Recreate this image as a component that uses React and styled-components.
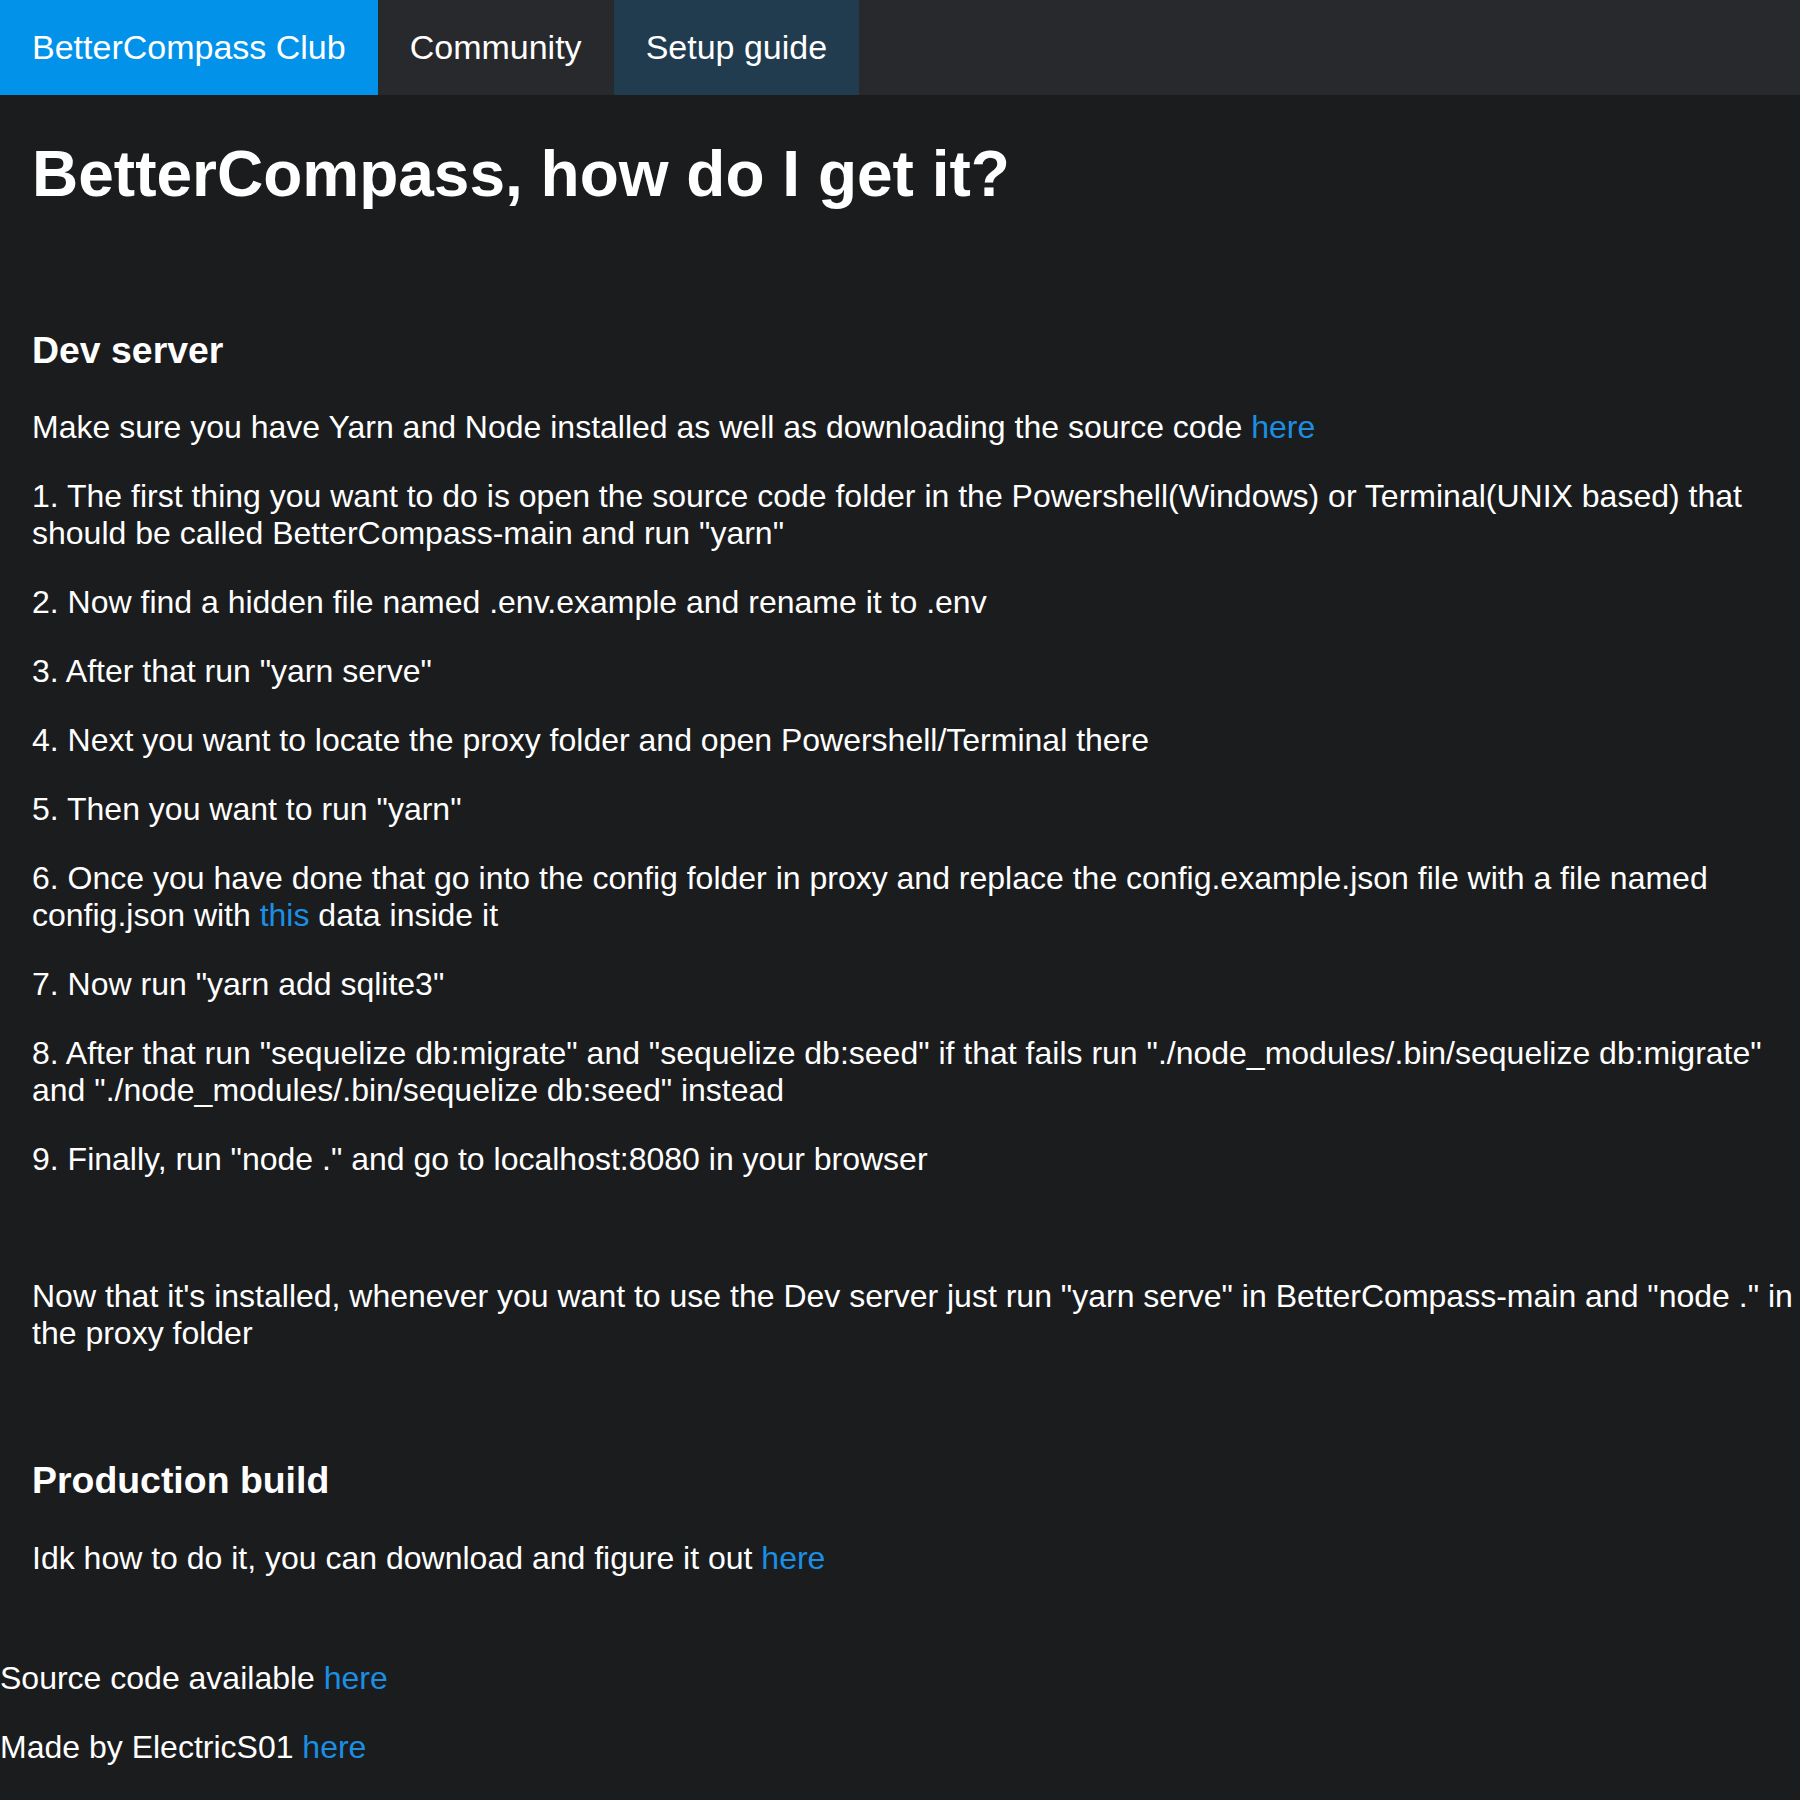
import React from "react";
import styled, { createGlobalStyle } from "styled-components";

const GlobalStyle = createGlobalStyle`
  html, body {
    margin: 0;
    padding: 0;
    background: #1b1c1e;
  }
  body {
    font-family: "Liberation Sans", Arial, Helvetica, sans-serif;
    color: #ffffff;
    min-height: 100vh;
  }
`;

const Page = styled.div`
  min-height: 1800px;
  background: #1b1c1e;
  display: flex;
  flex-direction: column;
`;

const NavBar = styled.nav`
  display: flex;
  height: 95px;
  background: #28292c;
`;

const NavTab = styled.a`
  display: flex;
  align-items: center;
  padding: 0 32px;
  font-size: 34px;
  color: #ffffff;
  text-decoration: none;
  background: ${(p) =>
    p.$variant === "brand" ? "#0292ea" : p.$variant === "active" ? "#213b4f" : "transparent"};
`;

const Main = styled.main`
  display: flex;
  flex-direction: column;
  padding: 0 0 0 32px;
`;

const Title = styled.h1`
  margin: 43px 0 0;
  font-size: 64px;
  font-weight: 700;
  line-height: 1.15;
`;

const SectionTitle = styled.h3`
  margin: ${(p) => (p.$first ? "117.2px" : "107.2px")} 0 0;
  font-size: 37.44px;
  font-weight: 700;
  line-height: 1.15;
`;

const Text = styled.p`
  margin: ${(p) => p.$top || "32.2px"} 0 0;
  font-size: 32px;
  line-height: 1.15;
`;

const Link = styled.a`
  color: #1a8fe3;
  text-decoration: none;
`;

const Footer = styled.footer`
  display: flex;
  flex-direction: column;
  padding-top: 83.8px;
`;

const FooterLine = styled.p`
  margin: ${(p) => (p.$first ? "0" : "32.2px")} 0 0;
  font-size: 32px;
  line-height: 1.15;
`;

export default function App() {
  return (
    <>
      <GlobalStyle />
      <Page>
        <NavBar>
          <NavTab $variant="brand">BetterCompass Club</NavTab>
          <NavTab>Community</NavTab>
          <NavTab $variant="active">Setup guide</NavTab>
        </NavBar>
        <Main>
          <Title>BetterCompass, how do I get it?</Title>
          <SectionTitle $first>Dev server</SectionTitle>
          <Text $top="37.6px">
            Make sure you have Yarn and Node installed as well as downloading the source code{" "}
            <Link>here</Link>
          </Text>
          <Text>
            1. The first thing you want to do is open the source code folder in the
            Powershell(Windows) or Terminal(UNIX based) that should be called BetterCompass-main
            and run "yarn"
          </Text>
          <Text>2. Now find a hidden file named .env.example and rename it to .env</Text>
          <Text>3. After that run "yarn serve"</Text>
          <Text>4. Next you want to locate the proxy folder and open Powershell/Terminal there</Text>
          <Text>5. Then you want to run "yarn"</Text>
          <Text>
            6. Once you have done that go into the config folder in proxy and replace the
            config.example.json file with a file named config.json with <Link>this</Link> data
            inside it
          </Text>
          <Text>7. Now run "yarn add sqlite3"</Text>
          <Text>
            8. After that run "sequelize db:migrate" and "sequelize db:seed" if that fails run
            "./node_modules/.bin/sequelize db:migrate" and "./node_modules/.bin/sequelize db:seed"
            instead
          </Text>
          <Text>9. Finally, run "node ." and go to localhost:8080 in your browser</Text>
          <Text $top="100.7px">
            Now that it's installed, whenever you want to use the Dev server just run "yarn serve"
            in BetterCompass-main and "node ." in the proxy folder
          </Text>
          <SectionTitle>Production build</SectionTitle>
          <Text $top="37.6px">
            Idk how to do it, you can download and figure it out <Link>here</Link>
          </Text>
        </Main>
        <Footer>
          <FooterLine $first>
            Source code available <Link>here</Link>
          </FooterLine>
          <FooterLine>
            Made by ElectricS01 <Link>here</Link>
          </FooterLine>
        </Footer>
      </Page>
    </>
  );
}
